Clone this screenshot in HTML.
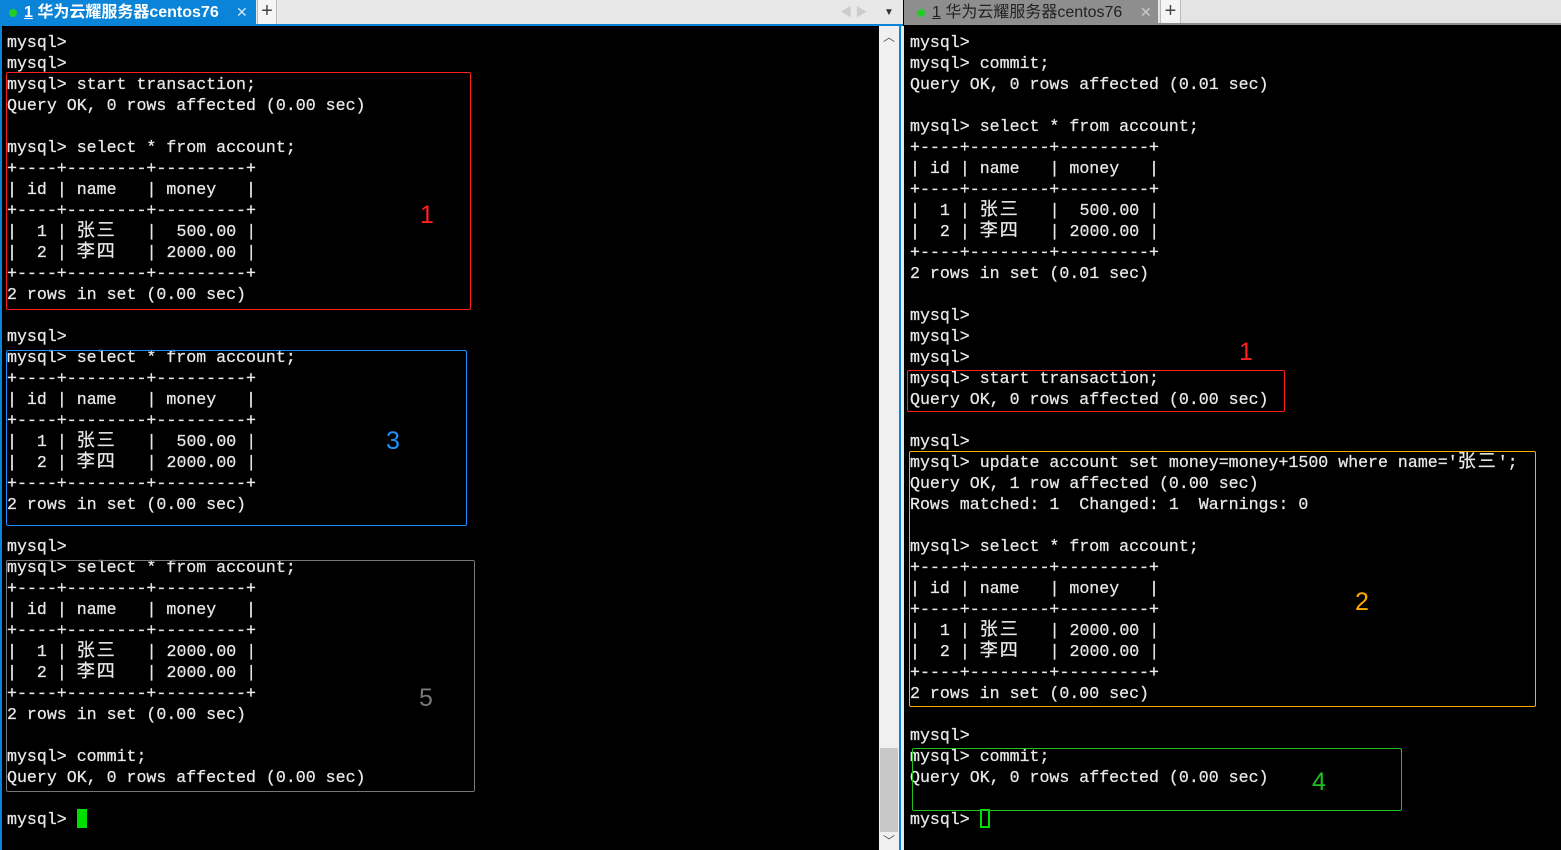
<!DOCTYPE html>
<html><head><meta charset="utf-8"><style>
*{margin:0;padding:0;box-sizing:border-box}
body{width:1561px;height:850px;overflow:hidden;background:#000;position:relative;font-family:"Liberation Mono","Noto Sans CJK SC",monospace}
.abs{position:absolute}
pre{position:absolute;font-family:"Liberation Mono","Noto Sans CJK SC",monospace;font-size:16.6px;line-height:21px;color:#e8e8e8;white-space:pre;-webkit-text-stroke:0.25px #e8e8e8}
b{font-weight:normal;color:#e8e8e8}
i{font-style:normal;display:inline-block;width:20px;text-align:left;font-size:18px;line-height:18px}
.tab{font-family:"Liberation Sans","Noto Sans CJK SC",sans-serif;font-size:16px;line-height:25px;white-space:nowrap}
.num{position:absolute;font-family:"Liberation Sans",sans-serif;font-size:25px}
</style></head><body>
<div class="abs" style="left:0;top:0;width:903px;height:25px;background:#e8e8e8"></div>
<div class="abs tab" style="left:0;top:0;width:256px;height:25px;background:#0a84d8;color:#fff;font-weight:bold">
<span style="position:absolute;left:9px;top:9px;width:8px;height:8px;border-radius:50%;background:#22cc22"></span>
<span style="position:absolute;left:24px;top:0"><u>1</u> 华为云耀服务器centos76</span>
<span style="position:absolute;left:236px;top:0;font-weight:normal;color:#cfe6f7;font-size:14px">✕</span></div>
<div class="abs tab" style="left:257px;top:0;width:20px;height:24px;background:#f5f5f5;border-left:1px solid #bbb;border-right:1px solid #bbb;text-align:center;color:#444;font-size:20px;line-height:23px">+</div>
<div class="abs tab" style="left:840px;top:0;color:#ccc;font-size:12px">◀ ▶</div>
<div class="abs tab" style="left:884px;top:0;color:#333;font-size:10px">▼</div>
<div class="abs" style="left:0;top:24px;width:903px;height:2px;background:#0a84d8"></div>
<div class="abs" style="left:0;top:25px;width:2px;height:825px;background:#0a84d8"></div>
<div class="abs" style="left:879px;top:26px;width:20px;height:824px;background:#f0f0f0"></div>
<div class="abs" style="left:880px;top:748px;width:18px;height:84px;background:#c8c8c8"></div>
<div class="abs" style="left:883px;top:28px;color:#555;font-size:12px">︿</div>
<div class="abs" style="left:883px;top:832px;color:#555;font-size:12px">﹀</div>
<div class="abs" style="left:899px;top:26px;width:2px;height:824px;background:#0a84d8"></div>
<div class="abs" style="left:901px;top:26px;width:3px;height:824px;background:#e8e8e8"></div>
<div class="abs" style="left:904px;top:0;width:657px;height:25px;background:#e4e4e4"></div>
<div class="abs tab" style="left:904px;top:0;width:254px;height:24px;background:#8e8e8e;color:#222">
<span style="position:absolute;left:13px;top:9px;width:8px;height:8px;border-radius:50%;background:#22cc22"></span>
<span style="position:absolute;left:28px;top:0"><u>1</u> 华为云耀服务器centos76</span>
<span style="position:absolute;left:236px;top:0;color:#ccc;font-size:14px">✕</span></div>
<div class="abs tab" style="left:1160px;top:0;width:21px;height:24px;background:#f5f5f5;border-left:1px solid #bbb;border-right:1px solid #bbb;text-align:center;color:#444;font-size:20px;line-height:23px">+</div>
<div class="abs" style="left:904px;top:23px;width:657px;height:2px;background:#8e8e8e"></div>

<pre style="left:7px;top:32px">mysql&gt;
mysql&gt;
mysql&gt; start transaction;
Query OK, 0 rows affected (0.00 sec)

mysql&gt; select * from account;
<b>+----+--------+---------+</b>
<b>|</b> id <b>|</b> name   <b>|</b> money   <b>|</b>
<b>+----+--------+---------+</b>
<b>|</b>  1 <b>|</b> <i>张</i><i>三</i>   <b>|</b>  500.00 <b>|</b>
<b>|</b>  2 <b>|</b> <i>李</i><i>四</i>   <b>|</b> 2000.00 <b>|</b>
<b>+----+--------+---------+</b>
2 rows in set (0.00 sec)

mysql&gt;
mysql&gt; select * from account;
<b>+----+--------+---------+</b>
<b>|</b> id <b>|</b> name   <b>|</b> money   <b>|</b>
<b>+----+--------+---------+</b>
<b>|</b>  1 <b>|</b> <i>张</i><i>三</i>   <b>|</b>  500.00 <b>|</b>
<b>|</b>  2 <b>|</b> <i>李</i><i>四</i>   <b>|</b> 2000.00 <b>|</b>
<b>+----+--------+---------+</b>
2 rows in set (0.00 sec)

mysql&gt;
mysql&gt; select * from account;
<b>+----+--------+---------+</b>
<b>|</b> id <b>|</b> name   <b>|</b> money   <b>|</b>
<b>+----+--------+---------+</b>
<b>|</b>  1 <b>|</b> <i>张</i><i>三</i>   <b>|</b> 2000.00 <b>|</b>
<b>|</b>  2 <b>|</b> <i>李</i><i>四</i>   <b>|</b> 2000.00 <b>|</b>
<b>+----+--------+---------+</b>
2 rows in set (0.00 sec)

mysql&gt; commit;
Query OK, 0 rows affected (0.00 sec)

mysql&gt; </pre>
<div class="abs" style="left:77px;top:809px;width:10px;height:19px;background:#00e000"></div>

<pre style="left:910px;top:32px">mysql&gt;
mysql&gt; commit;
Query OK, 0 rows affected (0.01 sec)

mysql&gt; select * from account;
<b>+----+--------+---------+</b>
<b>|</b> id <b>|</b> name   <b>|</b> money   <b>|</b>
<b>+----+--------+---------+</b>
<b>|</b>  1 <b>|</b> <i>张</i><i>三</i>   <b>|</b>  500.00 <b>|</b>
<b>|</b>  2 <b>|</b> <i>李</i><i>四</i>   <b>|</b> 2000.00 <b>|</b>
<b>+----+--------+---------+</b>
2 rows in set (0.01 sec)

mysql&gt;
mysql&gt;
mysql&gt;
mysql&gt; start transaction;
Query OK, 0 rows affected (0.00 sec)

mysql&gt;
mysql&gt; update account set money=money+1500 where name='<i>张</i><i>三</i>';
Query OK, 1 row affected (0.00 sec)
Rows matched: 1  Changed: 1  Warnings: 0

mysql&gt; select * from account;
<b>+----+--------+---------+</b>
<b>|</b> id <b>|</b> name   <b>|</b> money   <b>|</b>
<b>+----+--------+---------+</b>
<b>|</b>  1 <b>|</b> <i>张</i><i>三</i>   <b>|</b> 2000.00 <b>|</b>
<b>|</b>  2 <b>|</b> <i>李</i><i>四</i>   <b>|</b> 2000.00 <b>|</b>
<b>+----+--------+---------+</b>
2 rows in set (0.00 sec)

mysql&gt;
mysql&gt; commit;
Query OK, 0 rows affected (0.00 sec)

mysql&gt; </pre>
<div class="abs" style="left:980px;top:809px;width:10px;height:19px;border:2px solid #00e000"></div>

<div class="abs" style="left:6px;top:72px;width:465px;height:238px;border:1px solid #ff1e1e;border-radius:2px"></div>
<div class="abs" style="left:6px;top:350px;width:461px;height:176px;border:1px solid #1e8fff;border-radius:2px"></div>
<div class="abs" style="left:6px;top:560px;width:469px;height:232px;border:1px solid #777;border-radius:2px"></div>
<div class="abs" style="left:907px;top:370px;width:378px;height:42px;border:1px solid #ff1e1e;border-radius:2px"></div>
<div class="abs" style="left:909px;top:451px;width:627px;height:256px;border:1px solid #ffaa00;border-radius:2px"></div>
<div class="abs" style="left:912px;top:748px;width:490px;height:63px;border:1px solid #20c020;border-radius:2px"></div>
<div class="num" style="left:420px;top:201px;color:#ff2020">1</div>
<div class="num" style="left:386px;top:427px;color:#1e90ff">3</div>
<div class="num" style="left:419px;top:684px;color:#777">5</div>
<div class="num" style="left:1239px;top:338px;color:#ff2020">1</div>
<div class="num" style="left:1355px;top:588px;color:#ffaa00">2</div>
<div class="num" style="left:1312px;top:768px;color:#20c020">4</div>
</body></html>
